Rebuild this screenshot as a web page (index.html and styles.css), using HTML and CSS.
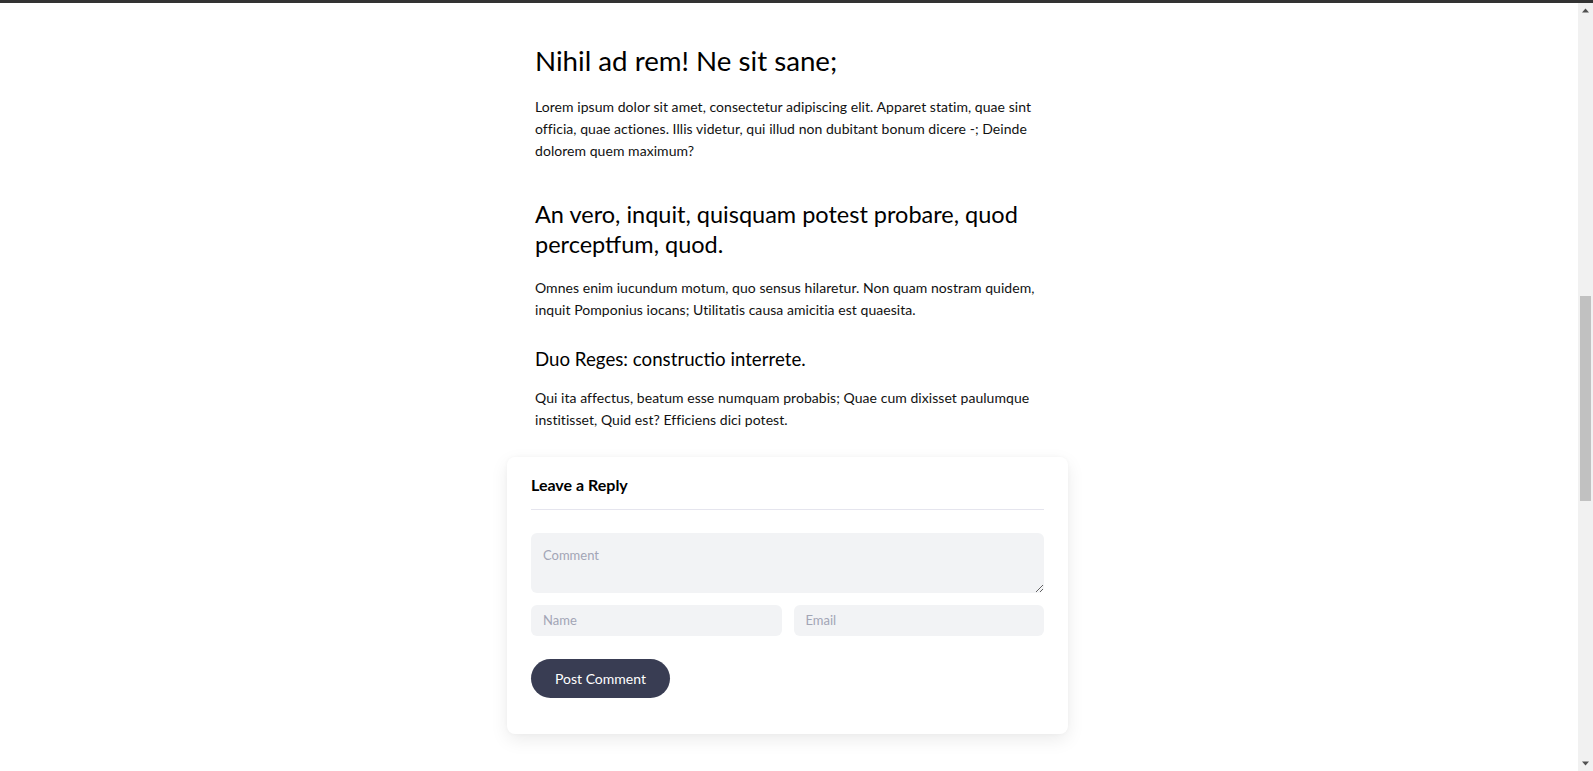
FILE: index.html
```html
<!DOCTYPE html>
<html lang="la">
<head>
<meta charset="utf-8">
<title>Nihil ad rem! Ne sit sane;</title>
<link rel="stylesheet" href="styles.css">
</head>
<body>
<div class="topbar"></div>
<div class="viewport">
  <main class="page">
    <div class="column">
      <article class="post">
        <h2 class="post-h1">Nihil ad rem! Ne sit sane;</h2>
        <p class="post-p">Lorem ipsum dolor sit amet, consectetur adipiscing elit. Apparet statim, quae sint officia, quae actiones. Illis videtur, qui illud non dubitant bonum dicere -; Deinde dolorem quem maximum?</p>
        <h3 class="post-h2">An vero, inquit, quisquam potest probare, quod perceptfum, quod.</h3>
        <p class="post-p">Omnes enim iucundum motum, quo sensus hilaretur. Non quam nostram quidem, inquit Pomponius iocans; Utilitatis causa amicitia est quaesita.</p>
        <h4 class="post-h3">Duo Reges: constructio interrete.</h4>
        <p class="post-p">Qui ita affectus, beatum esse numquam probabis; Quae cum dixisset paulumque institisset, Quid est? Efficiens dici potest.</p>
      </article>

      <section class="reply-card">
        <h3 class="reply-title">Leave a Reply</h3>
        <form class="reply-form">
          <textarea class="field field-area" placeholder="Comment"></textarea>
          <div class="field-row">
            <input class="field field-input" type="text" placeholder="Name">
            <input class="field field-input" type="email" placeholder="Email">
          </div>
          <button class="btn-post" type="button">Post Comment</button>
        </form>
      </section>
    </div>
  </main>

  <div class="scrollbar" aria-hidden="true">
    <div class="sb-btn">
      <svg width="15" height="15" viewBox="0 0 15 15"><path d="M4 9.5 L7.5 5.5 L11 9.5 Z" fill="#505050"/></svg>
    </div>
    <div class="sb-track">
      <div class="sb-gap"></div>
      <div class="sb-thumb"></div>
    </div>
    <div class="sb-btn">
      <svg width="15" height="15" viewBox="0 0 15 15"><path d="M4 5.5 L11 5.5 L7.5 9.5 Z" fill="#505050"/></svg>
    </div>
  </div>
</div>
</body>
</html>
```
FILE: styles.css
```css
html, body {
  margin: 0;
  padding: 0;
  height: 100%;
  overflow: hidden;
  background: #ffffff;
}

body {
  display: flex;
  flex-direction: column;
  font-family: Lato, "Open Sans", sans-serif;
  color: #111111;
}

.topbar {
  height: 3px;
  flex: none;
  background: #333333;
}

.viewport {
  flex: 1;
  display: flex;
  min-height: 0;
}

.page {
  flex: 1;
  min-width: 0;
  padding-top: 41px;
}

.column {
  width: 508px;
  margin: 0 auto;
}

.post-h1 {
  margin: 0 0 18px;
  font-size: 27.7px;
  line-height: 34px;
  font-weight: 400;
  color: #000;
}

.post-h2 {
  margin: 37px 0 18px;
  font-size: 23.5px;
  line-height: 30px;
  font-weight: 400;
  color: #000;
}

.post-h3 {
  margin: 26px 0 16px;
  font-size: 18.7px;
  line-height: 24px;
  font-weight: 400;
  color: #000;
}

.post-p {
  margin: 0;
  font-size: 14px;
  line-height: 22px;
  letter-spacing: 0.05px;
  color: #111;
}

.reply-card {
  box-sizing: border-box;
  margin: 26px -25px 0 -28px;
  padding: 18px 24px 36px;
  background: #fff;
  border-radius: 8px;
  box-shadow: 0 6px 18px rgba(0, 0, 0, 0.08), 0 0 4px rgba(0, 0, 0, 0.03);
}

.reply-title {
  margin: 0;
  padding-bottom: 14px;
  border-bottom: 1px solid #e5e5ee;
  font-size: 16px;
  line-height: 20px;
  font-weight: 700;
  color: #000;
}

.reply-form {
  display: flex;
  flex-direction: column;
  align-items: flex-start;
  margin-top: 23px;
}

.field {
  box-sizing: border-box;
  width: 100%;
  border: none;
  outline: none;
  background: #f2f3f5;
  border-radius: 6px;
  font-family: Lato, "Open Sans", sans-serif;
  font-size: 13px;
  color: #333;
  padding: 0 12px;
}

.field::placeholder {
  color: #a2a5b6;
}

.field-area {
  display: block;
  height: 60px;
  padding-top: 13px;
  line-height: 18px;
  resize: both;
}

.field-row {
  width: 100%;
  display: grid;
  grid-template-columns: 1fr 1fr;
  gap: 12px;
  margin-top: 12px;
}

.field-input {
  height: 31px;
  line-height: 31px;
}

.btn-post {
  margin-top: 23px;
  height: 39px;
  padding: 0 24px;
  border: none;
  border-radius: 20px;
  background: #393d53;
  color: #fff;
  font-family: Lato, "Open Sans", sans-serif;
  font-size: 14px;
  cursor: pointer;
}

.scrollbar {
  flex: none;
  width: 15px;
  display: flex;
  flex-direction: column;
  background: #f1f1f1;
}

.sb-btn {
  height: 15px;
  flex: none;
  display: flex;
}

.sb-track {
  flex: 1;
  display: flex;
  flex-direction: column;
}

.sb-gap {
  height: 278px;
  flex: none;
}

.sb-thumb {
  height: 205px;
  margin: 0 2px;
  background: #c1c1c1;
}
```
